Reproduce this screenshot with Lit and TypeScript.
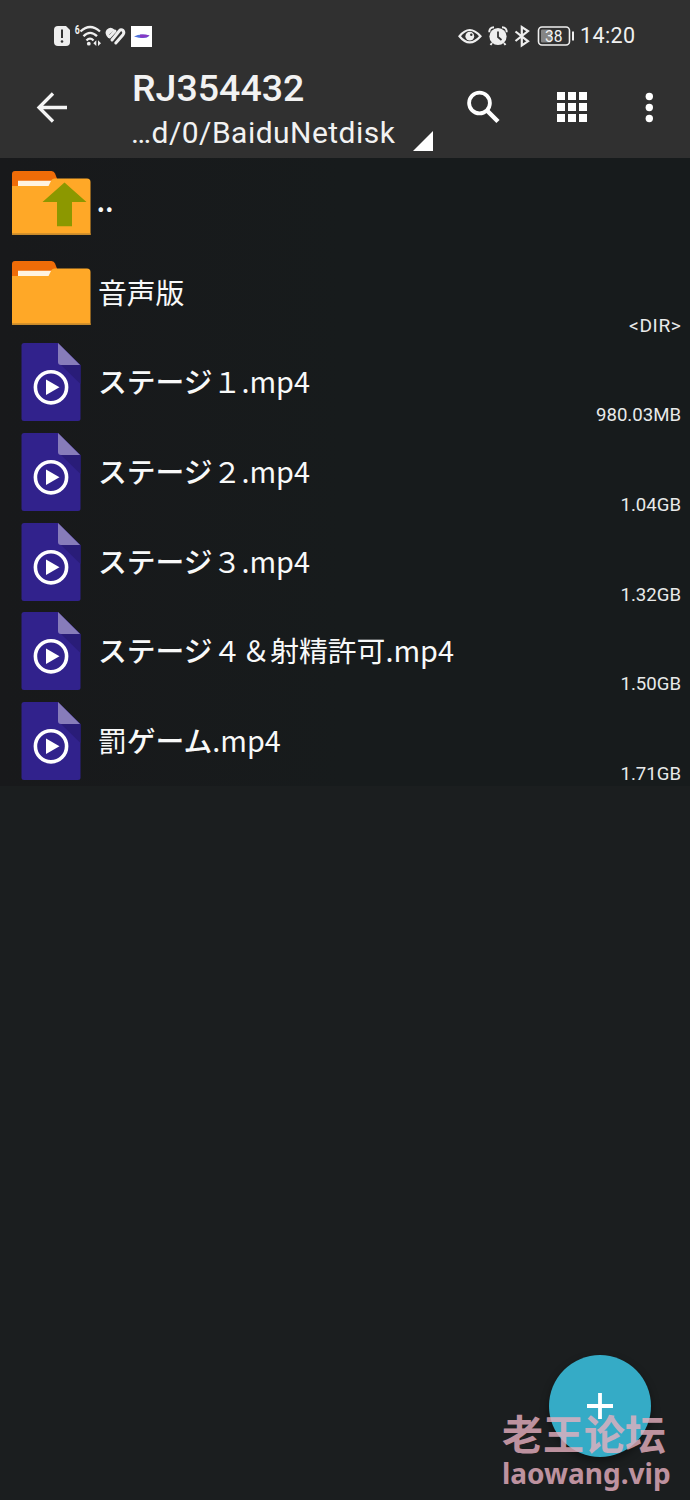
import { LitElement, html, css, svg, nothing } from "lit";
import { customElement, property } from "lit/decorators.js";

type Kind = "up" | "folder" | "video";

interface Entry {
  kind: Kind;
  name: string;
  size: string;
}

const ENTRIES: Entry[] = [
  { kind: "up", name: "..", size: "" },
  { kind: "folder", name: "音声版", size: "<DIR>" },
  { kind: "video", name: "ステージ１.mp4", size: "980.03MB" },
  { kind: "video", name: "ステージ２.mp4", size: "1.04GB" },
  { kind: "video", name: "ステージ３.mp4", size: "1.32GB" },
  { kind: "video", name: "ステージ４＆射精許可.mp4", size: "1.50GB" },
  { kind: "video", name: "罰ゲーム.mp4", size: "1.71GB" },
];

@customElement("file-icon")
class FileIcon extends LitElement {
  @property() kind: Kind = "folder";

  static styles = css`
    :host { display: block; width: 98px; height: 90px; flex: none; }
    svg { display: block; }
  `;

  render() {
    if (this.kind === "video") {
      return html`<svg width="98" height="90" viewBox="0 0 98 90">
        <path d="M24 6H58L80.500 28V81.500Q80.500 84 78 84H24Q21.500 84 21.500 81.500V8.500Q21.500 6 24 6Z" fill="#31228c"/>
        <path d="M61 28H80.500V47Z" fill="#291c78"/>
        <path d="M58 6L80 28H61Q58 28 58 25Z" fill="#877cba"/>
        <circle cx="51" cy="50.300" r="15.600" fill="none" stroke="#fff" stroke-width="3.600"/>
        <path d="M46 42.500V58L59.500 50.300Z" fill="#fff"/>
      </svg>`;
    }
    return html`<svg width="98" height="90" viewBox="0 0 98 90">
      <path d="M15 13H51.500Q54 13 55 15.500L58 23V32H12V16Q12 13 15 13Z" fill="#ef6c08"/>
      <path d="M18 22.800H53V28H18Z" fill="#fff3e0"/>
      <path d="M12 28H48.500L51.500 22Q52.500 20.500 54.500 20.500H87Q90.500 20.500 90.500 24V77H12Z" fill="#ffa827"/>
      <path d="M12 75.300H90.500V77H12Z" fill="#c78a2c"/>
      ${this.kind === "up"
        ? svg`<path d="M64.500 24.500L86.500 44H72V68.300H57V44H42.500Z" fill="#8c9800"/>`
        : nothing}
    </svg>`;
  }
}

@customElement("file-row")
class FileRow extends LitElement {
  @property({ attribute: false }) entry!: Entry;

  static styles = css`
    :host { display: flex; align-items: flex-start; height: 89.65px; color: #f8f9f9; }
    .name {
      flex: none; margin-top: 22px; white-space: nowrap;
      font: 400 28.8px/44px "Noto Sans CJK JP", sans-serif;
    }
    .up { font-weight: 500; margin: 20px 0 0 -1.5px; }
    .kana { font-weight: 500; }
    .size {
      margin-left: auto; padding: 66px 9px 0 0; white-space: nowrap;
      font: 400 18.6px/24px Roboto, sans-serif; color: #e8eaea;
    }
    .dir { font-size: 19.2px; letter-spacing: 0.6px; padding-right: 8.5px; }
  `;

  render() {
    const { kind, name, size } = this.entry;
    const parts = name.split(/([\u30a0-\u30ff]+)/).filter(Boolean);
    return html`<file-icon .kind=${kind}></file-icon>
      <div class="name ${kind}">${parts.map((p) =>
        /[\u30a0-\u30ff]/.test(p) ? html`<span class="kana">${p}</span>` : p)}</div>
      <div class="size ${kind === "folder" ? "dir" : ""}">${size}</div>`;
  }
}

@customElement("status-bar")
class StatusBar extends LitElement {
  static styles = css`
    :host {
      display: flex; align-items: center; justify-content: space-between;
      height: 72px; padding: 0 54px 0 53px; color: #f0f0f0;
    }
    .group { display: flex; align-items: center; }
    svg { display: block; flex: none; }
    .time { font: 400 21.5px/28px Roboto, sans-serif; letter-spacing: 0.4px; width: 56px; white-space: nowrap; }
    .num { font: 400 16px Roboto, sans-serif; }
    .gen { font: 700 12px Roboto, sans-serif; }
  `;

  render() {
    return html`
      <div class="group">
        <svg width="100" height="28" viewBox="53 22 100 28">
          <path d="M58 26H66L70 30V42Q70 46 66 46H58Q54 46 54 42V30Q54 26 58 26Z" fill="#eee"/>
          <path d="M62 29.500V38" stroke="#333" stroke-width="2"/><circle cx="62" cy="41.500" r="1.300" fill="#333"/>
          <text class="gen" x="74.800" y="34" fill="#eee" textLength="5" lengthAdjust="spacingAndGlyphs">6</text>
          <g fill="none" stroke="#eee" stroke-width="2.300">
            <path d="M80.500 31.500Q90 22.500 100 31.500M83.500 36.200Q90 29.500 97 36.200M86.500 40.500Q90 36.800 93.500 40.500"/>
          </g>
          <circle cx="88.800" cy="43.700" r="1.900" fill="#eee"/>
          <path d="M96.300 40.300V46L93.300 43.200ZM98 40.300V46L101 43.200Z" fill="#eee"/>
          <g fill="none" stroke="#eee" stroke-linecap="round" stroke-linejoin="round">
            <path d="M109 36.500L107.800 35Q106.300 32.500 108 30.500Q110.500 28 113.300 30.500" stroke-width="3"/>
            <path d="M109.500 37L115 31" stroke-width="3"/>
            <path d="M112 40L119 31.200Q121 28.800 123 30.500Q124.600 32.500 123 34.700L115.800 43" stroke-width="3"/>
            <path d="M108.500 33L111 31" stroke-width="3"/>
          </g>
          <rect x="131" y="26" width="21" height="21" fill="#fff"/>
          <path d="M134 36.500Q140 33 149.500 35.500Q146 40 134 36.500Z" fill="#4f72da"/>
          <path d="M140 34.600Q146 34 149.500 35.500Q146 38.500 140 37.600Z" fill="#8838c4"/>
        </svg>
      </div>
      <div class="group">
        <svg width="122" height="28" viewBox="458 22 122 28">
          <path d="M459.500 36.200Q469.500 23.800 480.500 36.200Q469.500 48.600 459.500 36.200Z" fill="none" stroke="#eee" stroke-width="2.200"/>
          <circle cx="469.800" cy="36.200" r="4.400" fill="#eee"/><circle cx="471.300" cy="34.800" r="1.200" fill="#333"/>
          <circle cx="498" cy="36.500" r="8.600" fill="#eee"/>
          <path d="M489.300 32.300Q489 27.500 494 27.300M502 27.300Q507 27.500 506.700 32.300M492 43L490.500 45M504 43L505.500 45" fill="none" stroke="#eee" stroke-width="2"/>
          <path d="M498 31.500V37L501.500 40" fill="none" stroke="#333" stroke-width="1.800"/>
          <path d="M515.500 31.500L528 41.300L521.800 45.500V27L528 31L515.500 41" fill="none" stroke="#eee" stroke-width="2.200"/>
          <rect x="538.500" y="27" width="31" height="18" rx="3.500" fill="none" stroke="#eee" stroke-width="1.600"/>
          <rect x="541" y="29.500" width="10" height="13" rx="1" fill="#858585"/>
          <text class="num" x="545" y="41.800" fill="#f4f4f4" textLength="17.500" lengthAdjust="spacingAndGlyphs">38</text>
          <path d="M573 31.500V40.500" stroke="#eee" stroke-width="2"/>
        </svg>
        <span class="time">14:20</span>
      </div>`;
  }
}

@customElement("tool-bar")
class ToolBar extends LitElement {
  static styles = css`
    :host { display: flex; height: 86px; color: #f2f2f2; }
    svg { display: block; flex: none; }
    .titles { width: 265px; margin-left: 29px; display: flex; flex-direction: column; white-space: nowrap; }
    .title { font: 500 37.5px/40px Roboto, sans-serif; margin-top: -4px; }
    .path { font: 400 30px/36px Roboto, sans-serif; letter-spacing: 0.47px; margin: 7px 0 0 -1px; }
  `;

  render() {
    return html`
      <svg width="103" height="86" viewBox="0 72 103 86">
        <path d="M67 107.500H39M53 93.500L39 107.500L53 121.500" fill="none" stroke="#f4f4f4" stroke-width="3.300"/>
      </svg>
      <div class="titles">
        <div class="title">RJ354432</div>
        <div class="path">…d/0/BaiduNetdisk</div>
      </div>
      <svg width="293" height="86" viewBox="397 72 293 86">
        <path d="M433 131V151H413Z" fill="#fff"/>
        <circle cx="479.500" cy="103" r="10.400" fill="none" stroke="#fff" stroke-width="3.800"/>
        <path d="M487 110.500L498 121.500" stroke="#fff" stroke-width="4.500"/>
        ${[0, 1, 2].map((r) =>
          [0, 1, 2].map((c) => svg`<rect x=${557 + c * 11} y=${92 + r * 11} width="8" height="8" fill="#fff"/>`))}
        ${[96.500, 107.500, 118.500].map((y) => svg`<circle cx="649.300" cy=${y} r="3.700" fill="#fff"/>`)}
      </svg>`;
  }
}

@customElement("app-root")
class AppRoot extends LitElement {
  static styles = css`
    :host {
      display: flex; flex-direction: column; position: relative; overflow: hidden;
      width: 690px; height: 1500px; background: #1b1e1f;
    }
    .header { background: #303030; height: 158px; }
    .list { background: linear-gradient(90deg, #18191b, #171b1c 50%); height: 627.500px; }
    .fab {
      position: absolute; left: 549px; top: 1355px; width: 102px; height: 102px; border-radius: 50%;
      background: #35abc6; box-shadow: 0 4px 8px rgba(0, 0, 0, .4);
    }
    .fab svg { display: block; }
    .mark {
      position: absolute; left: 502px; top: 1409px; width: 180px; white-space: nowrap;
      color: #e6b0bf; opacity: .8;
    }
    .cn { font: 700 41px/46px "Noto Sans CJK SC", sans-serif; }
    .en { font: 700 28px/32px "Noto Sans", sans-serif; margin-top: 2px; }
  `;

  render() {
    return html`
      <div class="header"><status-bar></status-bar><tool-bar></tool-bar></div>
      <div class="list">${ENTRIES.map((e) => html`<file-row .entry=${e}></file-row>`)}</div>
      <div class="fab">
        <svg width="102" height="102" viewBox="0 0 102 102">
          <path d="M51 38V64M38 51H64" stroke="#fff" stroke-width="3.800"/>
        </svg>
      </div>
      <div class="mark"><div class="cn">老王论坛</div><div class="en">laowang.vip</div></div>`;
  }
}
